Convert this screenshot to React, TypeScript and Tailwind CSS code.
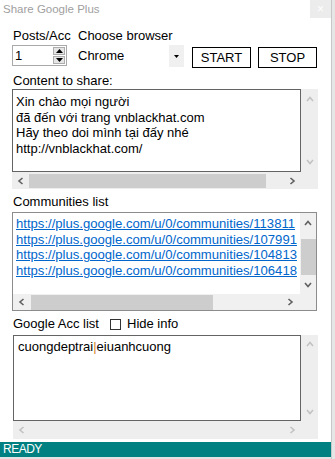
import React from "react";

const FONT = { fontFamily: '"Liberation Sans", Arial, sans-serif' };

function Chev({ dir, color, size = 8 }: { dir: "up" | "down" | "left" | "right"; color: string; size?: number }) {
  const paths: Record<string, string> = {
    up: "M1 6 L4 2.5 L7 6",
    down: "M1 2 L4 5.5 L7 2",
    left: "M5.5 1 L2 4 L5.5 7",
    right: "M2.5 1 L6 4 L2.5 7",
  };
  return (
    <svg width={size} height={size} viewBox="0 0 8 8">
      <path d={paths[dir]} fill="none" stroke={color} strokeWidth={1.6} />
    </svg>
  );
}

function Tri({ dir }: { dir: "up" | "down" }) {
  return (
    <svg width="7" height="4" viewBox="0 0 7 4">
      {dir === "up" ? <path d="M0 4 L3.5 0 L7 4 Z" fill="#000" /> : <path d="M0 0 L3.5 4 L7 0 Z" fill="#000" />}
    </svg>
  );
}

export default function App() {
  return (
    <div className="flex w-[335px] h-[459px] bg-white overflow-hidden text-[13px] text-black" style={FONT}>
      <div className="flex flex-col w-[331px] h-full">
        {/* title bar */}
        <div className="flex h-[18px] items-start justify-between">
          <div className="pl-[3px] pt-[2px] text-[11.5px] leading-[15px] text-[#a0a0a0]">Share Google Plus</div>
          <div className="w-[21px] h-[18px] bg-[#ececec] flex items-center justify-center text-white text-[12px] leading-none">×</div>
        </div>

        {/* labels row */}
        <div className="flex mt-[10px] h-[16px] leading-[16px]">
          <div className="ml-[13px] w-[65px]">Posts/Acc</div>
          <div>Choose browser</div>
        </div>

        {/* controls row */}
        <div className="flex mt-[1px] h-[23px] items-start">
          <div className="ml-[12px] w-[55px] h-[21px] border border-[#a9a9a9] flex items-center justify-between pl-[2px] pr-[1px]">
            <span className="leading-[16px]">1</span>
            <div className="flex flex-col gap-[1px]">
              <div className="w-[12px] h-[8px] bg-[#e5e5e5] border border-[#adadad] flex items-center justify-center"><Tri dir="up" /></div>
              <div className="w-[12px] h-[8px] bg-[#e5e5e5] border border-[#adadad] flex items-center justify-center"><Tri dir="down" /></div>
            </div>
          </div>
          <div className="ml-[11px] w-[106px] h-[22px] flex items-center justify-between">
            <span className="leading-[16px]">Chrome</span>
            <div className="w-[15px] h-[22px] bg-[#f0f0f0] flex items-center justify-center">
              <svg width="5" height="3" viewBox="0 0 5 3"><path d="M0 0 L2.5 3 L5 0 Z" fill="#000" /></svg>
            </div>
          </div>
          <div className="ml-[8px] mt-[2px] w-[59px] h-[21px] border border-black flex items-center justify-center leading-[16px]">START</div>
          <div className="ml-[7px] mt-[2px] w-[59px] h-[21px] border border-black flex items-center justify-center leading-[16px]">STOP</div>
        </div>

        {/* content to share */}
        <div className="ml-[13px] mt-[5px] h-[16px] leading-[16px]">Content to share:</div>
        <div className="ml-[12px] w-[306px] h-[100px] bg-[#eeeeee] flex flex-col">
          <div className="flex h-[83px]">
            <div className="w-[289px] h-[83px] bg-white border border-[#646464] pl-[3px] pt-[4px] leading-[15.5px] overflow-hidden whitespace-nowrap">
              <div>Xin chào mọi người</div>
              <div>đã đến với trang vnblackhat.com</div>
              <div>Hãy theo doi mình tại đấy nhé</div>
              <div>http://vnblackhat.com/</div>
            </div>
            <div className="w-[17px] flex flex-col items-center justify-between py-[6px]">
              <Chev dir="up" color="#c2c2c2" />
              <Chev dir="down" color="#c2c2c2" />
            </div>
          </div>
          <div className="flex items-center h-[17px] pr-[17px]">
            <div className="w-[17px] flex items-center justify-center"><Chev dir="left" color="#606060" /></div>
            <div className="w-[237px] h-[14px] bg-[#cdcdcd]" />
            <div className="flex-1 flex items-center justify-end pr-[5px]"><Chev dir="right" color="#606060" /></div>
          </div>
        </div>

        {/* communities list */}
        <div className="ml-[13px] mt-[5px] h-[16px] leading-[16px]">Communities list</div>
        <div className="ml-[12px] mt-[2px] w-[305px] h-[99px] border border-[#8c8c8c] flex flex-col bg-[#f0f0f0]">
          <div className="flex h-[81px]">
            <div className="w-[287px] bg-white pl-[3px] pt-[3px] text-[13.1px] leading-[15.6px] overflow-hidden whitespace-nowrap text-[#0066cc] underline">
              <div>https://plus.google.com/u/0/communities/113811</div>
              <div>https://plus.google.com/u/0/communities/107991</div>
              <div>https://plus.google.com/u/0/communities/104813</div>
              <div>https://plus.google.com/u/0/communities/106418</div>
            </div>
            <div className="w-[16px] flex flex-col items-center">
              <div className="h-[20px] flex items-center justify-center"><Chev dir="up" color="#606060" /></div>
              <div className="w-[15px] h-[36px] mt-[6px] bg-[#cdcdcd]" />
              <div className="flex-1 flex items-center justify-center"><Chev dir="down" color="#606060" /></div>
            </div>
          </div>
          <div className="flex items-center h-[16px]">
            <div className="w-[18px] flex items-center justify-center"><Chev dir="left" color="#606060" /></div>
            <div className="w-[182px] h-[15px] bg-[#cdcdcd]" />
            <div className="flex-1 flex items-center justify-end pr-[22px]"><Chev dir="right" color="#606060" /></div>
          </div>
        </div>

        {/* google acc list */}
        <div className="flex items-center mt-[5px] h-[16px] leading-[16px]">
          <div className="ml-[13px]">Google Acc list</div>
          <div className="ml-[11px] w-[11px] h-[11px] border border-[#333333] bg-white" />
          <div className="ml-[6px]">Hide info</div>
        </div>
        <div className="ml-[13px] mt-[3px] w-[305px] h-[104px] bg-[#eeeeee] flex flex-col">
          <div className="flex h-[86px]">
            <div className="w-[288px] bg-white border border-[#646464] pl-[4px] pt-[3px] leading-[16px] whitespace-nowrap">
              cuongdeptrai<span className="text-[#d0862a]">|</span>eiuanhcuong
            </div>
            <div className="w-[17px] flex flex-col items-center justify-between py-[5px]">
              <Chev dir="up" color="#c2c2c2" />
              <Chev dir="down" color="#c2c2c2" />
            </div>
          </div>
          <div className="flex items-center h-[18px] pr-[17px] justify-between">
            <div className="w-[17px] flex items-center justify-center"><Chev dir="left" color="#c2c2c2" /></div>
            <div className="pr-[5px] flex items-center"><Chev dir="right" color="#c2c2c2" /></div>
          </div>
        </div>

        {/* status bar */}
        <div className="mt-[3px] h-[15px] bg-[#008080] text-white text-[12px] leading-[15px] pl-[3px] tracking-[-0.5px]">READY</div>
        <div className="h-[2px] bg-[#e3e3e3]" />
      </div>
      <div className="w-[4px] h-full flex">
        <div className="w-[1px] bg-[#c8c8c8]" />
        <div className="w-[3px] bg-[#e6e6e6]" />
      </div>
    </div>
  );
}
